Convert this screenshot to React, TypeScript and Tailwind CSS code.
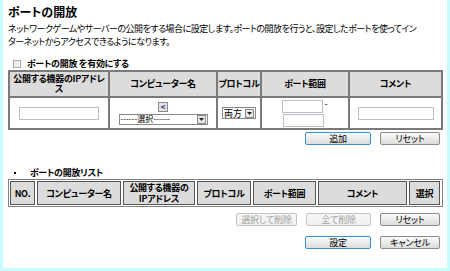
import React from "react";

const font = "font-['Noto_Sans_CJK_JP','Liberation_Sans',sans-serif] [font-feature-settings:'palt']";

function Btn({ label, w, focus, disabled }: { label: string; w: string; focus?: boolean; disabled?: boolean }) {
  return (
    <button
      className={`${w} h-[13px] rounded-[2px] border text-[9px] leading-[11px] tracking-[-0.2px] bg-gradient-to-b ${
        focus ? "border-[#3c8fd8]" : disabled ? "border-[#c4c4c4]" : "border-[#8a8a8a]"
      } ${disabled ? "text-[#a0a0a0] from-[#f7f7f7] to-[#f0f0f0]" : "text-black from-[#fbfbfb] to-[#dcdcdc]"}`}
    >
      {label}
    </button>
  );
}

function Arrow() {
  return (
    <span className="w-[9px] h-[9px] border border-[#8a8a8a] bg-[#e8e8e8] flex items-center justify-center">
      <svg width="5" height="3" viewBox="0 0 5 3">
        <path d="M0 0h5L2.5 3z" fill="#222" />
      </svg>
    </span>
  );
}

function Input({ w }: { w: string }) {
  return <div className={`${w} h-[13px] bg-white border border-[#b9c0c8]`} />;
}

export default function App() {
  const head = "bg-[#dcdcdc] flex items-center justify-center text-center font-bold text-[9px] leading-[10px] tracking-[-0.3px]";
  const cell2 = "border border-[#555] bg-[#dcdcdc] flex items-center justify-center text-center font-bold text-[9px] leading-[11px] tracking-[-0.3px]";
  return (
    <div className={`w-[450px] h-[271px] overflow-hidden bg-white border-x-[3px] border-b-[3px] border-[#c9fdfd] text-black ${font}`}>
      <div className="pl-[5px] pt-[5px]">
        <div className="text-[12px] leading-[13px] font-bold">ポートの開放</div>
        <div className="mt-[4px] text-[9px] leading-[13px] tracking-[-0.5px] whitespace-nowrap">
          ネットワークゲームやサーバーの公開をする場合に設定します。ポートの開放を行うと、設定したポートを使ってイン
          <br />
          ターネットからアクセスできるようになります。
        </div>
        <div className="mt-[10px] flex items-center h-[11px]">
          <span className="ml-[5px] w-[8px] h-[8px] border border-[#a8a8a8] bg-[#eeeeee]" />
          <span className="ml-[6px] text-[9px] font-bold leading-[11px] tracking-[-0.3px]">ポートの開放 を有効にする</span>
        </div>

        <div className="mt-[1px] w-[435px] grid grid-cols-[98px_106px_42px_86px_91px] gap-[2px] p-[2px] bg-[#7a7a7a]">
          <div className={`${head} h-[24px] px-[2px]`}>公開する機器のIPアドレス</div>
          <div className={head}>コンピューター名</div>
          <div className={head}>プロトコル</div>
          <div className={head}>ポート範囲</div>
          <div className={head}>コメント</div>

          <div className="bg-white h-[30px] flex items-center justify-center">
            <Input w="w-[80px]" />
          </div>
          <div className="bg-white flex flex-col items-center justify-center gap-[2px]">
            <span className="w-[10px] h-[10px] border border-[#8a8a8a] bg-[#e4e4e4] flex items-center justify-center text-[8px] leading-none font-bold text-[#2a2a6a]">
              &lt;
            </span>
            <div className="w-[89px] h-[11px] bg-white border border-[#888] flex items-center justify-between pl-[1px] pr-[1px]">
              <span className="text-[8px] leading-none">------選択------</span>
              <Arrow />
            </div>
          </div>
          <div className="bg-white flex items-center justify-center">
            <div className="w-[34px] h-[12px] border border-[#888] flex items-center justify-between px-[1px]">
              <span className="text-[9px] leading-none">両方</span>
              <Arrow />
            </div>
          </div>
          <div className="bg-white flex flex-col items-center justify-center gap-[1px]">
            <div className="flex items-start">
              <Input w="w-[41px]" />
              <span className="ml-[1px] text-[9px] leading-[8px]">-</span>
            </div>
            <div className="mr-[4px]">
              <Input w="w-[41px]" />
            </div>
          </div>
          <div className="bg-white flex items-center justify-center">
            <Input w="w-[76px]" />
          </div>
        </div>

        <div className="mt-[2px] flex justify-end gap-[9px] pr-[7px]">
          <Btn label="追加" w="w-[66px]" focus />
          <Btn label="リセット" w="w-[60px]" />
        </div>

        <div className="mt-[22px] flex items-center h-[11px] text-[9px] font-bold leading-[11px] tracking-[-0.3px]">
          <span className="ml-[6px] w-[2px] h-[2px] bg-black" />
          <span className="ml-[14px]">ポートの開放リスト</span>
        </div>

        <div className="mt-[1px] w-[435px] flex gap-[2px] p-[1px] border border-[#808080]">
          <div className={`${cell2} w-[25px] h-[24px]`}>NO.</div>
          <div className={`${cell2} w-[84px]`}>コンピューター名</div>
          <div className={`${cell2} w-[72px]`}>公開する機器の<br />IPアドレス</div>
          <div className={`${cell2} w-[54px]`}>プロトコル</div>
          <div className={`${cell2} w-[63px]`}>ポート範囲</div>
          <div className={`${cell2} w-[89px]`}>コメント</div>
          <div className={`${cell2} w-[31px]`}>選択</div>
        </div>

        <div className="mt-[6px] flex justify-end gap-[9px] pr-[7px]">
          <Btn label="選択して削除" w="w-[61px]" disabled />
          <Btn label="全て削除" w="w-[65px]" disabled />
          <Btn label="リセット" w="w-[60px]" />
        </div>
        <div className="mt-[10px] flex justify-end gap-[9px] pr-[7px]">
          <Btn label="設定" w="w-[66px]" focus />
          <Btn label="キャンセル" w="w-[60px]" />
        </div>
      </div>
    </div>
  );
}
